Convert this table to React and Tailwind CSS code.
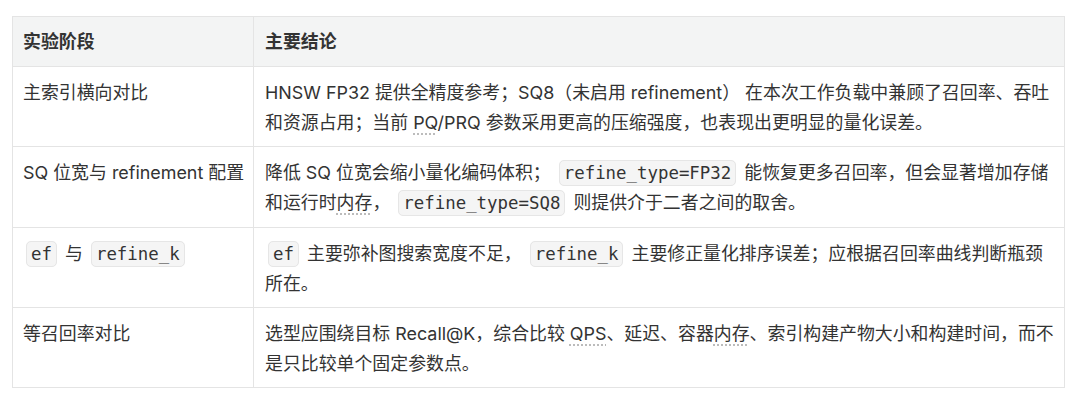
import React from "react";

const Code = ({ children }) => (
  <code className="mx-[3px] rounded-[5px] border border-[#e6e6e6] bg-[#f5f5f5] px-[4px] py-[2px] font-['DejaVu_Sans_Mono','Liberation_Mono',monospace] text-[17.4px] text-[#333]">
    {children}
  </code>
);

const Abbr = ({ children }) => (
  <span className="underline decoration-dotted decoration-[#b5b5b5] underline-offset-[5px]">{children}</span>
);

const td = "border border-[#e4e4e4] px-[10px] pt-[11px] pb-[8px] align-top whitespace-nowrap";
const td2 = "border border-[#e4e4e4] px-[11px] pt-[11px] pb-[8px] align-top whitespace-nowrap";

export default function App() {
  return (
    <div className="min-h-[403px] w-[1080px] bg-white pl-[12px] pt-[16px] font-['Inter','Noto_Sans_CJK_SC',sans-serif] text-[17.9px] leading-[30px] text-[#333] [text-spacing-trim:space-all]">
      <table className="w-[1053px] table-fixed border-collapse">
        <colgroup>
          <col className="w-[241px]" />
          <col />
        </colgroup>
        <thead>
          <tr className="bg-[#f3f4f4]">
            <th className="h-[50px] border border-[#e4e4e4] px-[10px] text-left font-semibold">实验阶段</th>
            <th className="h-[50px] border border-[#e4e4e4] px-[11px] text-left font-semibold">主要结论</th>
          </tr>
        </thead>
        <tbody>
          <tr>
            <td className={`h-[80px] ${td}`}>主索引横向对比</td>
            <td className={td2}>
              HNSW FP32 提供全精度参考；SQ8（未启用 refinement） 在本次工作负载中兼顾了召回率、吞吐
              <br />
              和资源占用；当前 <Abbr>PQ</Abbr>/PRQ 参数采用更高的压缩强度，也表现出更明显的量化误差。
            </td>
          </tr>
          <tr>
            <td className={`h-[81px] ${td}`}>SQ 位宽与 refinement 配置</td>
            <td className={td2}>
              降低 SQ 位宽会缩小量化编码体积； <Code>refine_type=FP32</Code> 能恢复更多召回率，但会显著增加存储
              <br />
              和运行时<Abbr>内存</Abbr>， <Code>refine_type=SQ8</Code> 则提供介于二者之间的取舍。
            </td>
          </tr>
          <tr>
            <td className={`h-[80px] ${td} pt-[10px]`}>
              <Code>ef</Code> 与 <Code>refine_k</Code>
            </td>
            <td className={`${td2} pt-[10px]`}>
              <Code>ef</Code> 主要弥补图搜索宽度不足， <Code>refine_k</Code> 主要修正量化排序误差；应根据召回率曲线判断瓶颈
              <br />
              所在。
            </td>
          </tr>
          <tr>
            <td className={`h-[80px] ${td}`}>等召回率对比</td>
            <td className={td2}>
              选型应围绕目标 Recall@K，综合比较 <Abbr>QPS</Abbr>、延迟、容器<Abbr>内存</Abbr>、索引构建产物大小和构建时间，而不
              <br />
              是只比较单个固定参数点。
            </td>
          </tr>
        </tbody>
      </table>
    </div>
  );
}
